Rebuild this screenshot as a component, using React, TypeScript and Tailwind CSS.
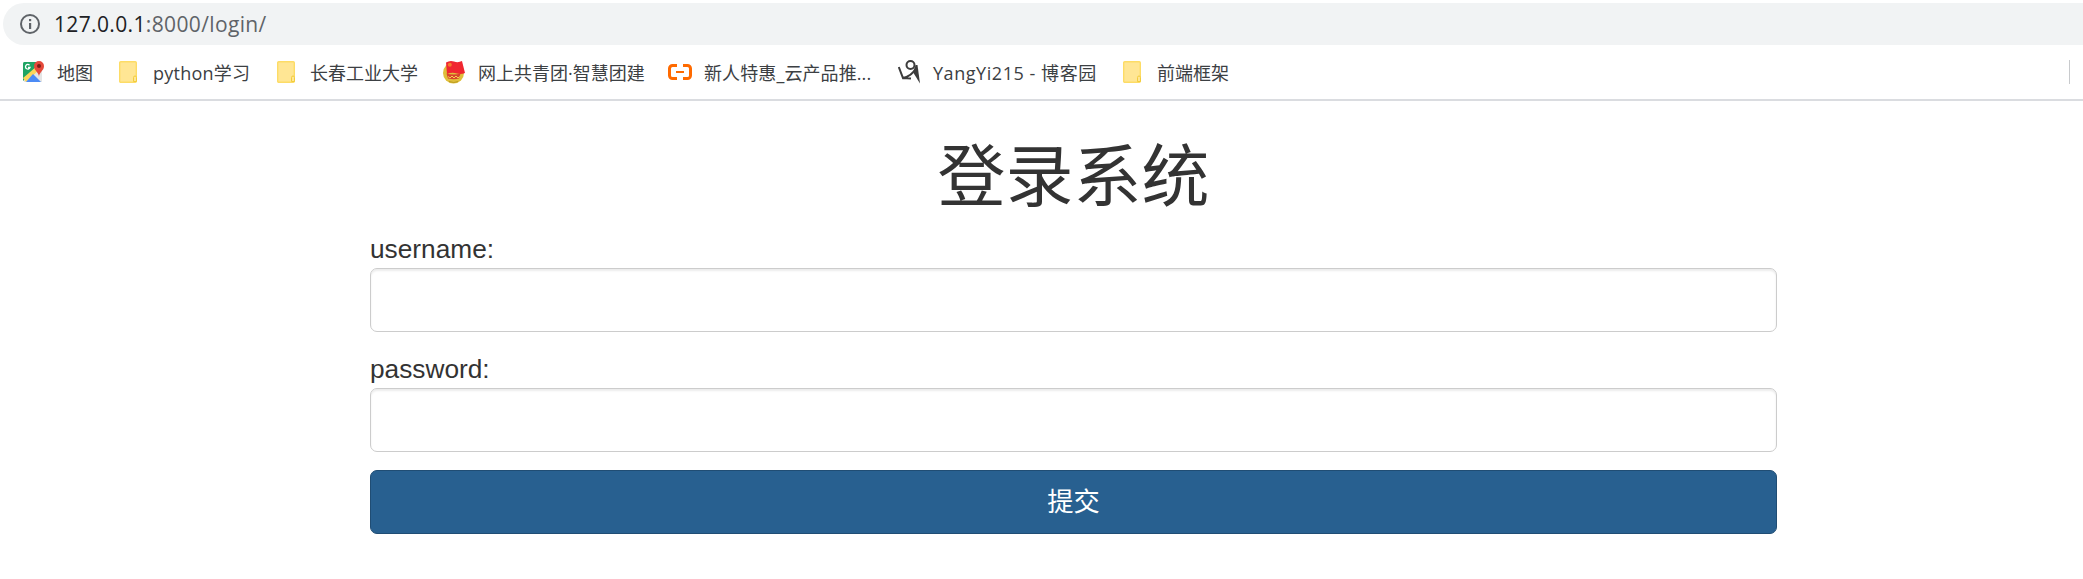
import type { ReactNode } from 'react';

const InfoIcon = () => (
  <svg className="h-5 w-5 shrink-0" viewBox="0 0 20 20" fill="none">
    <circle cx="10" cy="10" r="9" stroke="#5f6368" strokeWidth="2" />
    <rect x="9" y="9" width="2.2" height="6" fill="#5f6368" />
    <rect x="9" y="5" width="2.2" height="2.2" fill="#5f6368" />
  </svg>
);

const MapIcon = () => (
  <svg className="h-6 w-6 shrink-0" viewBox="0 0 24 24">
    <path d="M2 2h18v20H2z" fill="#e4e5e5" />
    <path d="M2 2h15L10 12 1 21V4a2 2 0 0 1 1-2z" fill="#1fa463" />
    <path d="M1 18 14 7l3 3L4 22z" fill="#fdd65b" />
    <path d="m4 22 7-8 8 8z" fill="#4c8bf5" />
    <path d="M7.500 5.200A2.300 2.300 0 1 0 8 7.500H6" fill="none" stroke="#fff" strokeWidth="1.300" />
    <path d="M17 17c0-5-5-6-5-11a5 5 0 0 1 10 0c0 5-5 6-5 11z" fill="#e5493a" />
    <circle cx="17" cy="6" r="2" fill="#7c1e17" />
  </svg>
);

const FolderIcon = () => (
  <svg className="h-[22px] w-[18px] shrink-0" viewBox="0 0 18 22" fill="none">
    <rect x=".7" y=".7" width="16.6" height="20.6" rx="1" fill="#ffe694" stroke="#fddc66" strokeWidth="1.4" />
    <path d="M14.500 20.500V16.500a1.500 1.500 0 0 1 3 0v4z" fill="#ffe694" stroke="#f2cc3c" />
  </svg>
);

const LeagueIcon = () => (
  <svg className="h-6 w-6 shrink-0" viewBox="0 0 24 24">
    <circle cx="11.500" cy="13" r="10.500" fill="#dfbe3a" />
    <path d="M4 2.500q4-2.500 8-1 4 1.500 8-.5l3 12q-4 1.500-8 .5-5-1.500-10 .5z" fill="#f02630" />
    <circle cx="7.800" cy="4.800" r="2" fill="#f47a2c" />
    <path d="M4.500 13.500q7 2 14 0l-1.500 5q-5 1.500-11 0z" fill="#d8432c" />
    <path d="m6 16.500 2 1.500 2-2 2 2 2-2 2 2 1.500-1.500" stroke="#f4cd50" fill="none" />
    <path d="M7 21.500q5 2 9 0" stroke="#b99a20" fill="none" />
  </svg>
);

const CloudIcon = () => (
  <svg className="h-6 w-6 shrink-0" viewBox="0 0 24 24" fill="none" stroke="#ff6a00" strokeWidth="3">
    <path d="M9 5.500H4.500A3 3 0 0 0 1.500 8.500v7a3 3 0 0 0 3 3H9M15 5.500h4.500a3 3 0 0 1 3 3v7a3 3 0 0 1-3 3H15" />
    <path d="M8 12h8" strokeWidth="2" />
  </svg>
);

const BlogIcon = () => (
  <svg className="h-6 w-6 shrink-0" viewBox="0 0 24 24" fill="none" stroke="#3c3c3c" strokeWidth="2">
    <circle cx="12.500" cy="5" r="4" />
    <path d="m.8 7 4.200 11q9-2 13-10M5 18l8 .5" />
    <path d="m17.500 5 2 0 2.500 18.500-6.500-10.500z" fill="#3c3c3c" stroke="none" />
  </svg>
);

type Item = { label: string; icon: ReactNode; box: string; slot: string; text: string };

const bookmarks: Item[] = [
  { label: '地图', icon: <MapIcon />, box: 'w-[97px]', slot: 'w-[35px]', text: '' },
  { label: 'python学习', icon: <FolderIcon />, box: 'w-[158px]', slot: 'w-[34px]', text: 'tracking-[0.25px]' },
  { label: '长春工业大学', icon: <FolderIcon />, box: 'w-[165px]', slot: 'w-[33px]', text: '' },
  { label: '网上共青团·智慧团建', icon: <LeagueIcon />, box: 'w-[226px]', slot: 'w-[36px]', text: '' },
  { label: '新人特惠_云产品推...', icon: <CloudIcon />, box: 'w-[230px]', slot: 'w-[36px]', text: 'tracking-[0.1px]' },
  { label: 'YangYi215 - 博客园', icon: <BlogIcon />, box: 'w-[225px]', slot: 'w-[35px]', text: 'tracking-[0.55px]' },
  { label: '前端框架', icon: <FolderIcon />, box: 'w-[120px]', slot: 'w-[34px]', text: '' },
];

const Field = ({ label, type }: { label: string; type: string }) => (
  <label className="block">
    <span className="block h-[37px] leading-[37px]">{label}</span>
    <input
      type={type}
      className="block h-16 w-full rounded-[7px] border border-[#ccc] bg-white px-5 shadow-[inset_0_2px_2px_rgba(0,0,0,0.075)] outline-none"
    />
  </label>
);

export default function App() {
  return (
    <div className="h-[579px] w-full overflow-hidden bg-white">
      <header className="flex h-[101px] flex-col border-b-2 border-[#dadce0] pt-[3px] font-['Open_Sans','Noto_Sans_CJK_SC',sans-serif]">
        <div className="ml-[3px] flex h-[42px] items-center rounded-l-full bg-[#f1f3f4] pl-[17px] text-[21px]">
          <InfoIcon />
          <div className="ml-[14px] pt-[2px] tracking-[0.36px] whitespace-pre text-[#5f6368]">
            <span className="text-[#202124]">127.0.0.1</span>:8000/login/
          </div>
        </div>
        <nav className="flex h-[54px] items-center pl-[22px] text-[18px] text-[#3c4043]">
          {bookmarks.map((b) => (
            <div key={b.label} className={`flex shrink-0 items-center whitespace-nowrap ${b.box}`}>
              <span className={`flex shrink-0 ${b.slot}`}>{b.icon}</span>
              <span className={`pt-[2px] ${b.text}`}>{b.label}</span>
            </div>
          ))}
          <span className="mr-[13px] ml-auto h-6 w-px bg-[#c8cacd]" />
        </nav>
      </header>
      <main className="ml-[370px] w-[1407px] pt-[39px] font-['Liberation_Sans','Noto_Sans_CJK_SC',sans-serif] text-[26.25px] text-[#333]">
        <h1 className="h-[91px] text-center text-[68px] leading-[74px]">登录系统</h1>
        <form className="flex flex-col">
          <Field label="username:" type="text" />
          <div className="h-[19px]" />
          <Field label="password:" type="password" />
          <button
            type="button"
            className="mt-[18px] h-16 rounded-[7px] border border-[#204d74] bg-[#286090] pt-[2px] text-white"
          >
            提交
          </button>
        </form>
      </main>
    </div>
  );
}
